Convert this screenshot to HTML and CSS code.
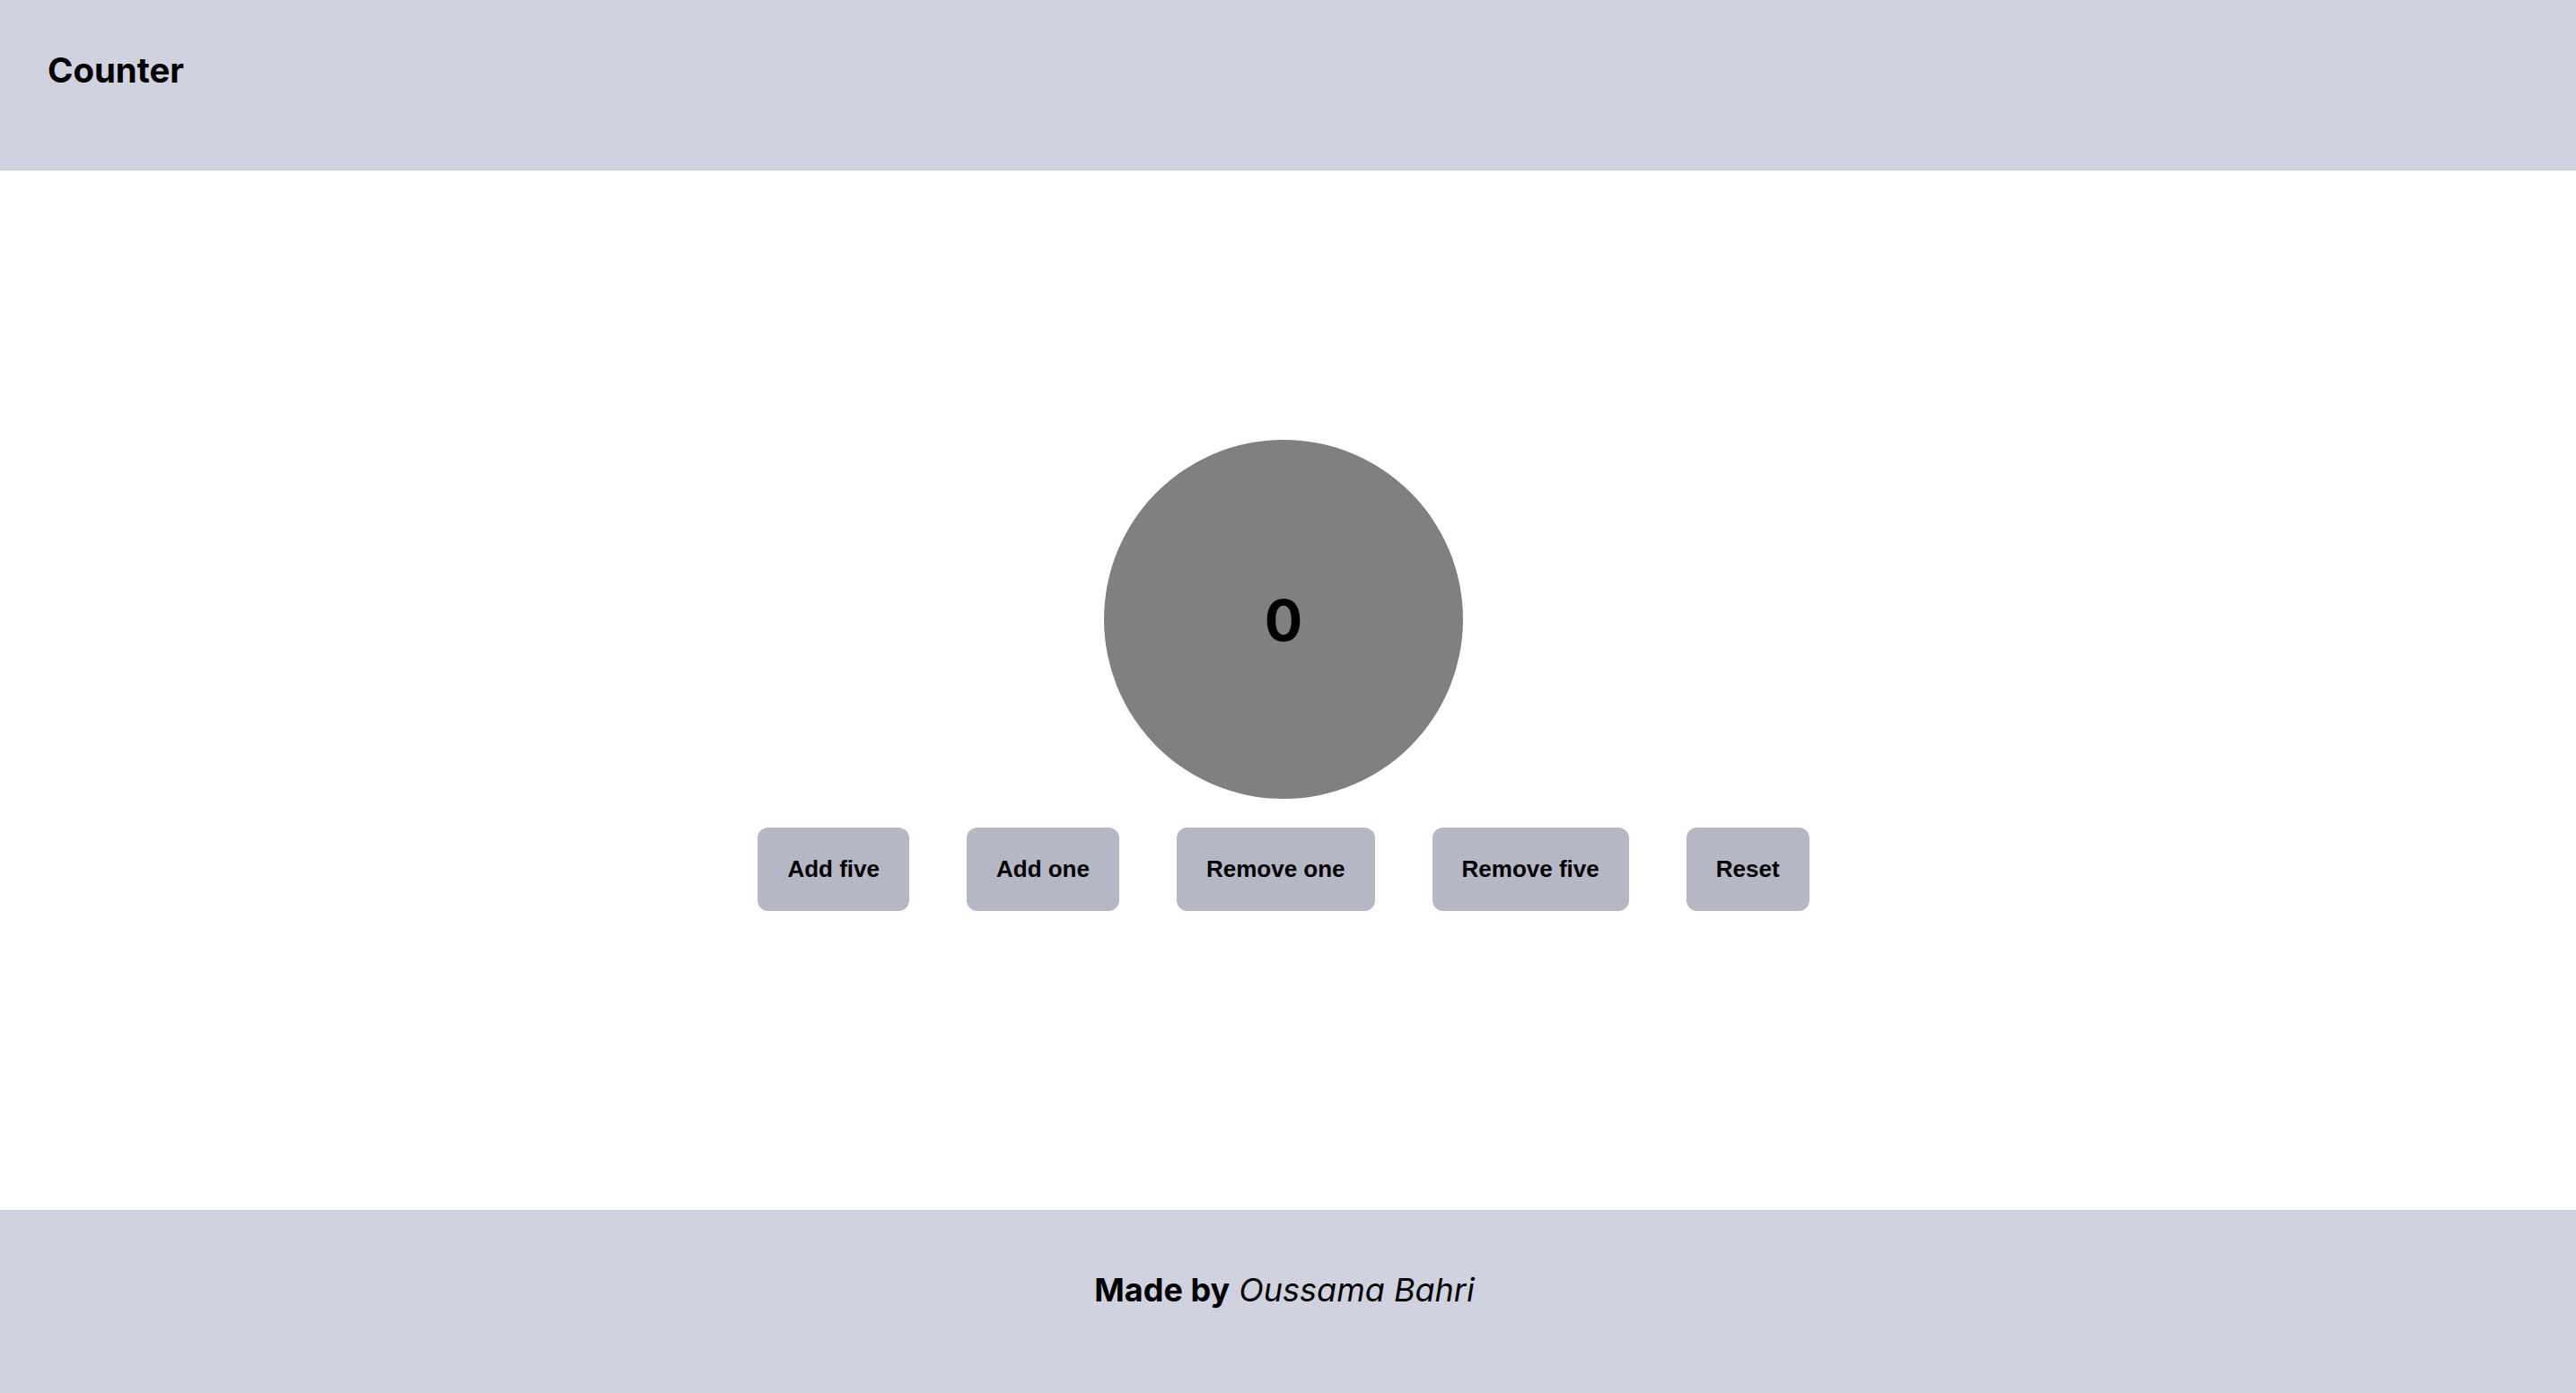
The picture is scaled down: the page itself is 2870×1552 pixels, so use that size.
FILE: index.html
```html
<!DOCTYPE html>
<html lang="en">
<head>
<meta charset="utf-8">
<title>Counter</title>
<link rel="stylesheet" href="styles.css">
</head>
<body>
  <header class="header">
    <h1 class="title">Counter</h1>
  </header>
  <main class="main">
    <div class="counter">
      <span class="count">0</span>
    </div>
    <div class="actions">
      <button class="btn">Add five</button>
      <button class="btn">Add one</button>
      <button class="btn">Remove one</button>
      <button class="btn">Remove five</button>
      <button class="btn">Reset</button>
    </div>
  </main>
  <footer class="footer">
    <p class="credit"><strong>Made by</strong> <em>Oussama Bahri</em></p>
  </footer>
</body>
</html>
```

FILE: styles.css
```css
* {
  box-sizing: border-box;
}

html, body {
  margin: 0;
  padding: 0;
}

body {
  display: flex;
  flex-direction: column;
  height: 100vh;
  font-family: Inter, "Noto Sans", sans-serif;
  color: #000;
  background: #fff;
}

.header {
  height: 190px;
  flex: 0 0 190px;
  background: #d0d2df;
  padding: 55px 53px 0;
}

.title {
  margin: 0;
  font-size: 38.4px;
  font-weight: 700;
  line-height: normal;
}

.main {
  flex: 1;
  display: flex;
  flex-direction: column;
  align-items: center;
  justify-content: center;
  gap: 32px;
  padding: 0 10px 33px 0;
}

.counter {
  width: 400px;
  height: 400px;
  border-radius: 50%;
  background: #808080;
  display: flex;
  align-items: center;
  justify-content: center;
}

.count {
  font-size: 63px;
  font-weight: 700;
  line-height: 1;
  padding-top: 2px;
}

.actions {
  display: flex;
  gap: 64px;
}

.btn {
  height: 93px;
  padding: 0 33px;
  border: none;
  border-radius: 12px;
  background: #b5b7c5;
  color: #000;
  font-family: "Liberation Sans", Arial, sans-serif;
  font-weight: 700;
  font-size: 26px;
  cursor: pointer;
}

.footer {
  flex: 0 0 204px;
  height: 204px;
  background: #d0d2df;
  padding: 67px 8px 0 0;
  text-align: center;
}

.credit {
  margin: 0;
  font-size: 36px;
  line-height: normal;
}

.credit strong {
  font-weight: 700;
}

.credit em {
  font-style: italic;
  font-weight: 400;
}
```
